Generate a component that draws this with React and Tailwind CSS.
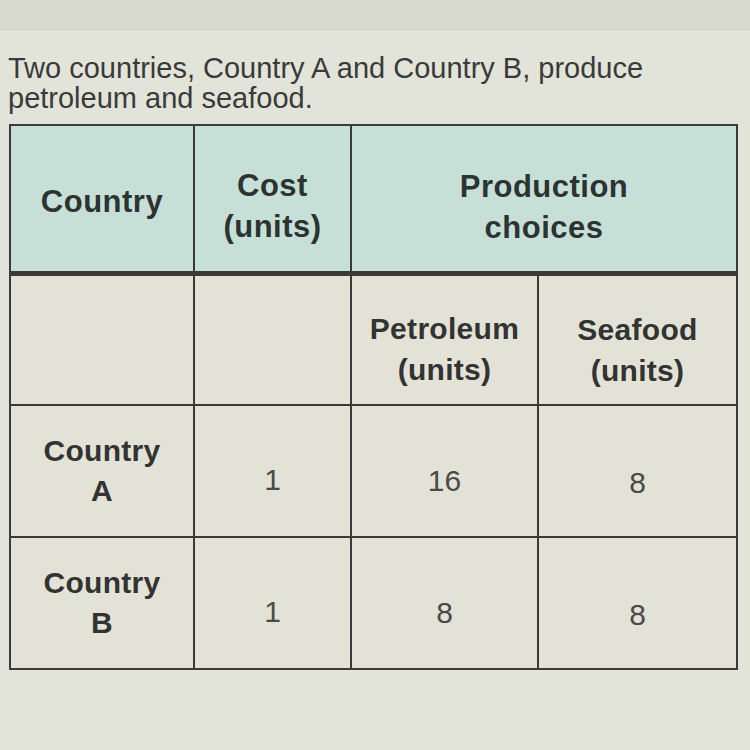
const rows = [
  { name: ['Country', 'A'], cost: '1', petroleum: '16', seafood: '8' },
  { name: ['Country', 'B'], cost: '1', petroleum: '8', seafood: '8' },
];

const cell = 'border-2 border-[#3a3a38] text-center align-middle p-0';

export default function App() {
  return (
    <div
      className="w-[750px] h-[750px] overflow-hidden bg-[#e3e4d9] text-[#333]"
      style={{ fontFamily: '"Liberation Sans", Arial, sans-serif' }}
    >
      <div className="h-[30px] bg-[#d8d9cf] border-b border-[#cbccc2]" />

      <p className="pl-[8px] pt-[23px] text-[29px] leading-[30px] text-[#3a3a3a]">
        Two countries, Country A and Country B, produce
        <br />
        petroleum and seafood.
      </p>

      <table className="ml-[9px] mt-[11px] w-[727px] border-collapse table-fixed">
        <colgroup>
          <col className="w-[184px]" />
          <col className="w-[157px]" />
          <col className="w-[187px]" />
          <col className="w-[199px]" />
        </colgroup>
        <thead>
          <tr className="h-[148px] bg-[#c6e0d8] text-[31px] leading-[41px] font-bold text-[#2d3331] tracking-[0.5px]">
            <th className={`${cell} border-b-[5px] pt-[6px]`}>Country</th>
            <th className={`${cell} border-b-[5px] pt-[16px]`}>
              Cost
              <br />
              (units)
            </th>
            <th colSpan={2} className={`${cell} border-b-[5px] pt-[18px]`}>
              Production
              <br />
              choices
            </th>
          </tr>
        </thead>
        <tbody className="bg-[#e2e3d6]">
          <tr className="h-[132px] text-[30px] leading-[41px] font-bold text-[#333] tracking-[0.3px]">
            <td className={cell}></td>
            <td className={cell}></td>
            <td className={`${cell} pt-[18px]`}>
              Petroleum
              <br />
              (units)
            </td>
            <td className={`${cell} pt-[20px]`}>
              Seafood
              <br />
              (units)
            </td>
          </tr>
          {rows.map((r) => (
            <tr key={r.name[1]} className="h-[132px]">
              <td className={`${cell} text-[30px] leading-[40px] font-bold text-[#333] tracking-[0.3px]`}>
                {r.name[0]}
                <br />
                {r.name[1]}
              </td>
              <td className={`${cell} pt-[16px] text-[30px] text-[#4a4a4a]`}>{r.cost}</td>
              <td className={`${cell} pt-[18px] text-[30px] text-[#4a4a4a]`}>{r.petroleum}</td>
              <td className={`${cell} pt-[22px] text-[30px] text-[#4a4a4a]`}>{r.seafood}</td>
            </tr>
          ))}
        </tbody>
      </table>
    </div>
  );
}
